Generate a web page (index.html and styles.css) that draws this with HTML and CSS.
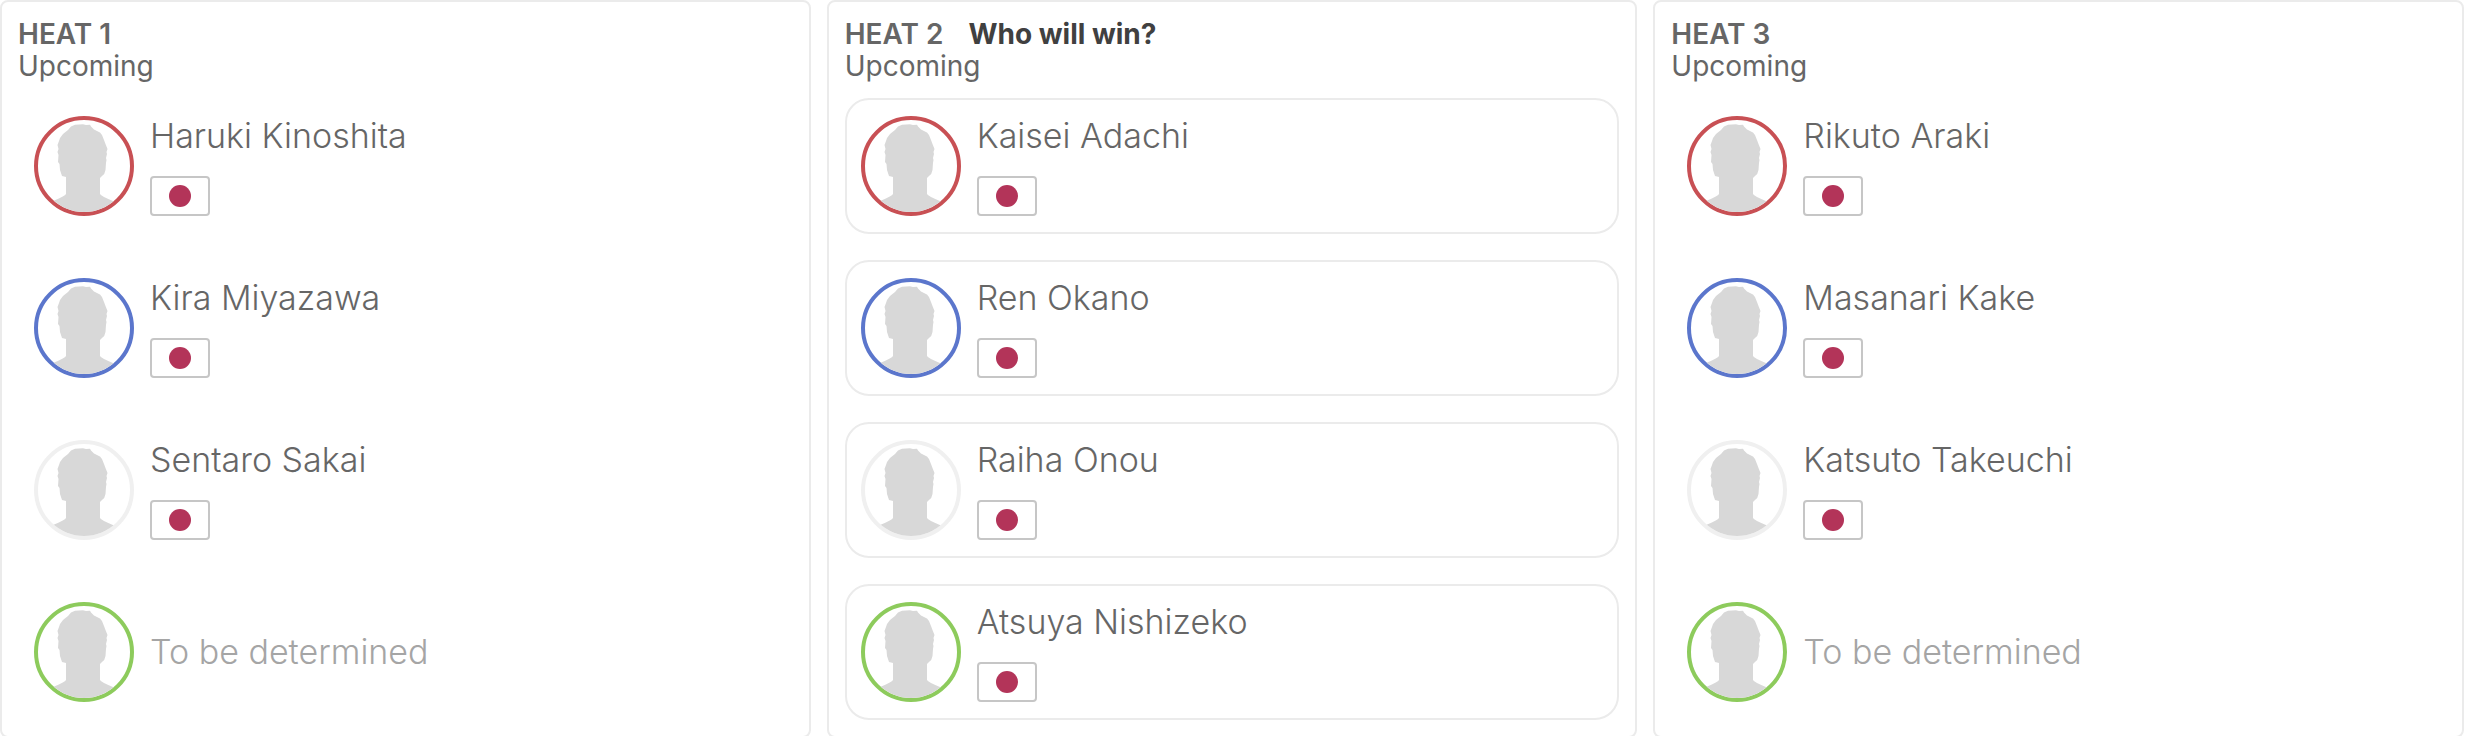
FILE: index.html
```html
<!DOCTYPE html>
<html lang="en">
    <head>
        <meta charset="utf-8">
        <title>Heats</title>
        <link rel="stylesheet" href="styles.css">
    </head>
    <body>
        <svg class="sprite" width="0" height="0" aria-hidden="true">
            <symbol id="person" viewBox="4 4 92 92">
                <path d="M32 61V78Q31 80 19 85L10 90V100H90V90L80 85.500Q67 80 66 78V62L68 60Q71 58 71.500 54L72 47L72.500 44L72 42L73 38L72.500 36L73.500 33L71.500 28L70 24L68 19L66 16.500L60 13.500L57 10.500L56 8.800L52 9L49 8.300L45 8.500L41 8.800L37 10.500L34 14L29 18L26 22L25 25L23.500 29L24.500 33L23.500 36L24.500 39L24 46L25.500 48L26 54L28 60Z"/>
            </symbol>
        </svg>
        <main class="heats">
            <section class="heat">
                <header>
                    <h2>HEAT 1</h2>
                    <p>Upcoming</p>
                </header>
                <ul class="athletes">
                    <li class="athlete red">
                        <svg class="avatar"><use href="#person"/></svg>
                        <div class="info"><span class="name">Haruki Kinoshita</span><span class="flag"></span></div>
                    </li>
                    <li class="athlete blue">
                        <svg class="avatar"><use href="#person"/></svg>
                        <div class="info"><span class="name">Kira Miyazawa</span><span class="flag"></span></div>
                    </li>
                    <li class="athlete white">
                        <svg class="avatar"><use href="#person"/></svg>
                        <div class="info"><span class="name">Sentaro Sakai</span><span class="flag"></span></div>
                    </li>
                    <li class="athlete green">
                        <svg class="avatar"><use href="#person"/></svg>
                        <span class="name tbd">To be determined</span>
                    </li>
                </ul>
            </section>
            <section class="heat">
                <header>
                    <h2>HEAT 2 <span class="question">Who will win?</span></h2>
                    <p>Upcoming</p>
                </header>
                <ul class="athletes">
                    <li>
                        <button type="button" class="athlete pick red">
                            <svg class="avatar"><use href="#person"/></svg>
                            <span class="info"><span class="name">Kaisei Adachi</span><span class="flag"></span></span>
                        </button>
                    </li>
                    <li>
                        <button type="button" class="athlete pick blue">
                            <svg class="avatar"><use href="#person"/></svg>
                            <span class="info"><span class="name">Ren Okano</span><span class="flag"></span></span>
                        </button>
                    </li>
                    <li>
                        <button type="button" class="athlete pick white">
                            <svg class="avatar"><use href="#person"/></svg>
                            <span class="info"><span class="name">Raiha Onou</span><span class="flag"></span></span>
                        </button>
                    </li>
                    <li>
                        <button type="button" class="athlete pick green">
                            <svg class="avatar"><use href="#person"/></svg>
                            <span class="info"><span class="name">Atsuya Nishizeko</span><span class="flag"></span></span>
                        </button>
                    </li>
                </ul>
            </section>
            <section class="heat">
                <header>
                    <h2>HEAT 3</h2>
                    <p>Upcoming</p>
                </header>
                <ul class="athletes">
                    <li class="athlete red">
                        <svg class="avatar"><use href="#person"/></svg>
                        <div class="info"><span class="name">Rikuto Araki</span><span class="flag"></span></div>
                    </li>
                    <li class="athlete blue">
                        <svg class="avatar"><use href="#person"/></svg>
                        <div class="info"><span class="name">Masanari Kake</span><span class="flag"></span></div>
                    </li>
                    <li class="athlete white">
                        <svg class="avatar"><use href="#person"/></svg>
                        <div class="info"><span class="name">Katsuto Takeuchi</span><span class="flag"></span></div>
                    </li>
                    <li class="athlete green">
                        <svg class="avatar"><use href="#person"/></svg>
                        <span class="name tbd">To be determined</span>
                    </li>
                </ul>
            </section>
        </main>
    </body>
</html>
```
FILE: styles.css
```css
*{
margin: 0;
padding: 0;
box-sizing: border-box;
}
body{
font-family: Inter, "Liberation Sans", sans-serif;
font-size: 28px;
line-height: 32px;
color: #666;
background: #fff;
}
.sprite{
position: absolute;
}
.heats{
display: grid;
grid-template-columns: repeat(3, 1fr);
gap: 16px;
padding-right: 8px;
}
.heat{
padding: 16px;
border: 2px solid #ebebeb;
border-radius: 8px;
}
.heat header{
margin-bottom: 16px;
}
.heat h2{
font-size: 28px;
font-weight: 600;
}
.question{
margin-left: 18px;
font-weight: 700;
color: #404040;
}
.athletes{
display: flex;
flex-direction: column;
gap: 26px;
list-style: none;
}
.athlete{
display: flex;
align-items: center;
gap: 16px;
width: 100%;
padding: 16px 14px;
border: 2px solid transparent;
border-radius: 24px;
}
.pick{
font: inherit;
color: inherit;
text-align: left;
background: #fff;
border-color: #ebebeb;
cursor: pointer;
}
.pick:hover{
background: #fafafa;
}
.avatar{
flex: none;
width: 100px;
height: 100px;
border: 4px solid #f0f0f0;
border-radius: 50%;
fill: #d8d8d8;
}
.red .avatar{
border-color: #c85054;
}
.blue .avatar{
border-color: #5b76cc;
}
.green .avatar{
border-color: #8dcb5c;
}
.info{
display: flex;
flex-direction: column;
gap: 20px;
}
.name{
font-size: 34px;
font-weight: 300;
line-height: 40px;
}
.tbd{
color: #a5a5a5;
}
.flag{
display: flex;
align-items: center;
justify-content: center;
width: 60px;
height: 40px;
border: 2px solid #c6c6c6;
border-radius: 4px;
}
.flag::before{
content: "";
width: 22px;
height: 22px;
border-radius: 50%;
background: #b33459;
}
```
